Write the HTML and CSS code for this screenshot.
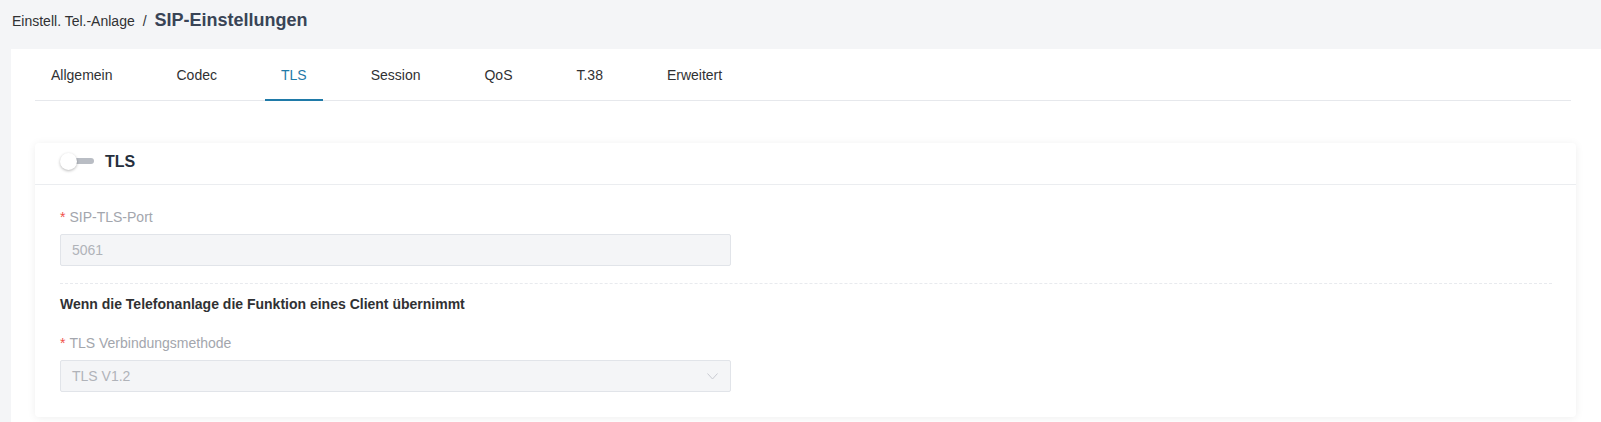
FILE: index.html
```html
<!DOCTYPE html>
<html lang="de">
<head>
<meta charset="utf-8">
<title>SIP-Einstellungen</title>
<link rel="stylesheet" href="styles.css">
</head>
<body>
<div class="breadcrumb">
  <span class="crumb">Einstell. Tel.-Anlage</span>
  <span class="sep">/</span>
  <span class="current">SIP-Einstellungen</span>
</div>
<div class="page-card">
  <nav class="tabs">
    <div class="tab">Allgemein</div>
    <div class="tab">Codec</div>
    <div class="tab active">TLS</div>
    <div class="tab">Session</div>
    <div class="tab">QoS</div>
    <div class="tab">T.38</div>
    <div class="tab">Erweitert</div>
  </nav>
  <section class="panel">
    <header class="panel-head">
      <span class="switch"><span class="track"></span><span class="knob"></span></span>
      <span class="panel-title">TLS</span>
    </header>
    <div class="panel-body">
      <div class="field">
        <label class="label"><span class="req">*</span>SIP-TLS-Port</label>
        <div class="input">5061</div>
      </div>
      <div class="divider"></div>
      <div class="subhead">Wenn die Telefonanlage die Funktion eines Client übernimmt</div>
      <div class="field">
        <label class="label"><span class="req">*</span>TLS Verbindungsmethode</label>
        <div class="input select">
          <span>TLS V1.2</span>
          <svg class="chev" width="11" height="7" viewBox="0 0 11 7"><path d="M0.5 0.5 L5.5 6 L10.5 0.5" fill="none" stroke="#c8cbd1" stroke-width="1"/></svg>
        </div>
      </div>
    </div>
  </section>
</div>
</body>
</html>
```

FILE: styles.css
```css
* { box-sizing: border-box; }
html, body { margin: 0; padding: 0; }
body {
  background: #f4f5f7;
  font-family: "Liberation Sans", Arial, sans-serif;
  color: #303133;
  width: 1601px;
  height: 422px;
  overflow: hidden;
}
.breadcrumb {
  height: 49px;
  padding: 8px 0 0 12px;
  display: flex;
  align-items: baseline;
  line-height: 24px;
}
.crumb { font-size: 14px; color: #303133; }
.sep { font-size: 14px; color: #303133; margin: 0 8px 0 8px; }
.current { font-size: 18px; font-weight: bold; color: #394456; }
.page-card {
  margin-left: 11px;
  background: #fff;
  padding: 0 25px 0 24px;
  min-height: 373px;
}
.tabs {
  display: flex;
  gap: 32px;
  border-bottom: 1px solid #e6e8ec;
  margin-right: 5px;
}
.tab {
  position: relative;
  height: 51px;
  padding: 16px 16px 0;
  line-height: 20px;
  font-size: 14px;
  color: #303133;
}
.tab.active { color: #1f7aa8; }
.tab.active::after {
  content: "";
  position: absolute;
  left: 0; right: 0; bottom: -1px;
  height: 2px;
  background: #1f7aa8;
}
.panel {
  margin-top: 42px;
  background: #fff;
  border-radius: 4px;
  box-shadow: 0 1px 8px rgba(0, 0, 0, 0.07);
}
.panel-head {
  height: 42px;
  padding: 0 0 4px 25px;
  display: flex;
  align-items: center;
  border-bottom: 1px solid #ebedf0;
}
.switch {
  position: relative;
  width: 35px;
  height: 17px;
  margin-right: 10px;
  flex: none;
}
.track {
  position: absolute;
  left: 4px; right: 1px; top: 5px;
  height: 6px;
  border-radius: 3px;
  background: #b9bdc4;
}
.knob {
  position: absolute;
  left: 0; top: 0;
  width: 17px; height: 17px;
  border-radius: 50%;
  background: #fff;
  box-shadow: 0 1px 3px rgba(0, 0, 0, 0.28);
}
.panel-title {
  font-size: 16px;
  font-weight: bold;
  color: #262f3d;
}
.panel-body {
  padding: 21px 24px 25px 25px;
}
.label {
  display: block;
  font-size: 14px;
  line-height: 22px;
  color: #a3a6ad;
  margin-bottom: 6px;
}
.req { color: #f0524a; margin-right: 4px; }
.input {
  width: 671px;
  height: 32px;
  border: 1px solid #e1e4e9;
  border-radius: 2px;
  background: #f4f5f7;
  padding: 0 11px;
  font-size: 14px;
  line-height: 30px;
  color: #b0b3b9;
}
.select {
  display: flex;
  align-items: center;
  justify-content: space-between;
}
.chev { display: block; margin-right: 1px; }
.divider {
  margin-top: 17px;
  border-top: 1px dashed #e8eaee;
}
.subhead {
  margin-top: 10px;
  font-size: 14px;
  font-weight: bold;
  line-height: 20px;
  color: #303133;
  margin-bottom: 18px;
}
```
